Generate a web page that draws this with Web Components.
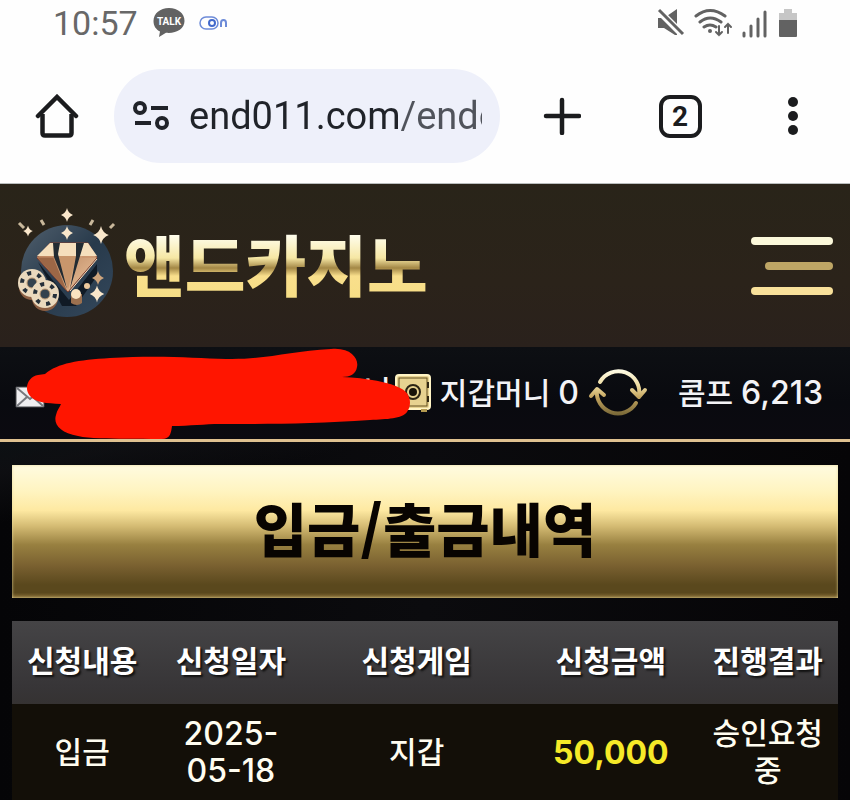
<!DOCTYPE html>
<html lang="ko">
<head>
<meta charset="utf-8">
<meta name="viewport" content="width=device-width, initial-scale=1">
<title>입금/출금내역</title>
<style>
    body {
        margin: 0;
        min-height: 100vh;
        display: flex;
        flex-direction: column;
        background: #060608;
        font-family: "Noto Sans CJK KR", sans-serif;
    }
</style>
</head>
<body>
<status-bar time="10:57"></status-bar>
<browser-toolbar url="end011.com/endo" tabs="2"></browser-toolbar>
<site-header>앤드카지노</site-header>
<wallet-bar money="0" comp="6,213"></wallet-bar>
<history-page>
    <page-title>입금/출금내역</page-title>
    <history-table></history-table>
</history-page>

<script>
class StatusBar extends HTMLElement {
    constructor() {
        super();
        this.attachShadow({ mode: "open" }).innerHTML = `
            <style>
                :host {
                    display: flex;
                    align-items: center;
                    height: 46px;
                    padding: 0 50px 0 53px;
                    background: #fefefe;
                    color: #686868;
                    font: 34px/46px Roboto, sans-serif;
                }
                svg { display: block; }
                .talk { margin-left: 15px; }
                .on { margin-left: 14px; }
                .right { margin-left: auto; }
            </style>
            <span>${this.getAttribute("time")}</span>
            <svg class="talk" width="32" height="32" viewBox="0 0 32 32">
                <path d="M16 1C7 1 .5 6.500 .5 14c0 5 2.500 8.500 6.500 10.500L6 30l7-4.200c10 1 18.500-3.800 18.500-11.800C31.500 6.500 25 1 16 1z" fill="#626262"/>
                <text x="16" y="18" text-anchor="middle" font-family="Roboto" font-weight="bold" font-size="10" fill="#fff">TALK</text>
            </svg>
            <svg class="on" width="30" height="16" viewBox="0 0 30 16" fill="none" stroke="#6d8bd8">
                <rect x="1" y="2" width="18" height="12" rx="6" stroke-width="1.500"/>
                <circle cx="13" cy="8" r="3" stroke="#4169cc" stroke-width="2"/>
                <path d="M22 12V8q0-3 2.500-3T27 8v4" stroke-width="2"/>
            </svg>
            <svg class="right" width="144" height="34" viewBox="0 0 144 34" fill="none" stroke="#626262">
                <path d="M2 12h6l13-9v26h-2L8 22H2z" fill="#626262" stroke="none"/>
                <path d="M1 3l26 26" stroke="#fefefe" stroke-width="7"/>
                <path d="M3 4l24 24" stroke-width="3"/>
                <g stroke-width="3" stroke-linecap="round">
                    <path d="M40 10q14-11 29 0M44 16q10-8 21 0M48 21q6-4 12 0"/>
                    <path d="M63 20v9M60 26l3 3 3-3M72 27v-9M69 21l3-3 3 3" stroke-width="2"/>
                    <path d="M88 27v3M95 20v10M102 13v17M109 6v24"/>
                </g>
                <circle cx="54" cy="25" r="2" fill="#626262" stroke="none"/>
                <path d="M128 3h8v4h5v8h-18V7h5z" fill="#c6c6c6" stroke="none"/>
                <path d="M123 14h18v16q0 1-1 1h-16q-1 0-1-1z" fill="#626262" stroke="none"/>
            </svg>
        `;
    }
}

class BrowserToolbar extends HTMLElement {
    constructor() {
        super();
        this.attachShadow({ mode: "open" }).innerHTML = `
            <style>
                :host {
                    display: grid;
                    grid-template-columns: 114px 1fr 124px 112px 114px;
                    align-items: center;
                    height: 138px;
                    padding-top: 3px;
                    box-sizing: border-box;
                    border-bottom: 1px solid #b9bdbd;
                    background: #fefefe;
                }
                button {
                    display: grid;
                    place-items: center;
                    justify-self: center;
                    padding: 0;
                    border: 0;
                    background: none;
                    color: #1b1c1e;
                }
                label {
                    display: flex;
                    align-items: center;
                    gap: 19px;
                    height: 94px;
                    padding: 0 18px;
                    box-sizing: border-box;
                    min-width: 0;
                    border-radius: 47px;
                    background: #eef0fa;
                }
                label svg { flex: none; }
                input {
                    flex: 1;
                    min-width: 0;
                    height: 56px;
                    padding: 0;
                    border: 0;
                    outline: 0;
                    background: linear-gradient(90deg, #202329 212px, #50535b 212px);
                    -webkit-background-clip: text;
                    background-clip: text;
                    color: transparent;
                    font: 38px/56px Roboto, sans-serif;
                }
                .tabs {
                    width: 43px;
                    height: 43px;
                    border: 4px solid #1b1c1e;
                    border-radius: 11px;
                    font: bold 28px/35px Roboto, sans-serif;
                }
            </style>
            <button aria-label="홈">
                <svg width="44" height="44" viewBox="0 0 44 44" fill="none" stroke="#1b1c1e" stroke-width="4.500" stroke-linecap="round">
                    <path d="M3 22L22 3l19 19"/>
                    <path d="M7.500 20v19q0 2.500 2.500 2.500h24q2.500 0 2.500-2.500V20" stroke-linecap="butt"/>
                </svg>
            </button>
            <label>
                <svg width="38" height="32" viewBox="0 0 38 32" fill="none" stroke="#202329" stroke-width="4" role="img" aria-label="주소">
                    <circle cx="8" cy="8" r="5"/>
                    <circle cx="30" cy="23" r="5"/>
                    <path d="M19 8h17M3 23h16"/>
                </svg>
                <input type="text" value="${this.getAttribute("url")}" spellcheck="false">
            </label>
            <button aria-label="새 탭">
                <svg width="38" height="38" viewBox="0 0 38 38" stroke="#1b1c1e" stroke-width="4.500" stroke-linecap="round">
                    <path d="M19 3v33M3 19h33"/>
                </svg>
            </button>
            <button class="tabs">${this.getAttribute("tabs")}</button>
            <button aria-label="메뉴">
                <svg width="12" height="40" viewBox="0 0 12 40" fill="#1b1c1e">
                    <circle cx="6" cy="6" r="5"/><circle cx="6" cy="20" r="5"/><circle cx="6" cy="34" r="5"/>
                </svg>
            </button>
        `;
    }
}

class SiteHeader extends HTMLElement {
    constructor() {
        super();
        this.attachShadow({ mode: "open" }).innerHTML = `
            <style>
                :host {
                    display: flex;
                    align-items: center;
                    justify-content: space-between;
                    height: 163px;
                    padding: 0 17px 0 10px;
                    background: linear-gradient(#292419, #2b231a 60%, #2a211c);
                }
                a {
                    display: flex;
                    align-items: center;
                    text-decoration: none;
                }
                svg { display: block; }
                .name {
                    margin-left: -6px;
                    padding-bottom: 8px;
                    background: linear-gradient(#fffef0 20px, #f6e7a4 44px, #a38745 54px, #f9df8c 62px, #f4dd80);
                    -webkit-background-clip: text;
                    background-clip: text;
                    color: transparent;
                    font-size: 66px;
                    font-weight: 900;
                    line-height: 96px;
                }
                button {
                    display: flex;
                    flex-direction: column;
                    align-items: flex-end;
                    gap: 17px;
                    padding: 0;
                    border: 0;
                    background: none;
                }
                i {
                    width: 82px;
                    height: 8px;
                    border-radius: 4px;
                    background: #fbf8da;
                }
                i:nth-child(2) { width: 68px; background: #bea665; }
                i:nth-child(3) { background: #f8e09a; }
            </style>
            <a href="#">
                <svg width="120" height="131" viewBox="0 0 120 131">
                    <defs>
                        <linearGradient id="disc" x1="0" y1="0" x2="1" y2="1">
                            <stop offset="0" stop-color="#51606e"/>
                            <stop offset=".5" stop-color="#283a4b"/>
                            <stop offset="1" stop-color="#34485c"/>
                        </linearGradient>
                        <linearGradient id="stone" x1="0" y1="0" x2="1" y2="1">
                            <stop offset="0" stop-color="#a9714c"/>
                            <stop offset="1" stop-color="#efc7a0"/>
                        </linearGradient>
                        <path id="star" d="M0-7Q1-2 6 0 1 2 0 7-1 2-6 0-1-2 0-7z"/>
                        <g id="chip">
                            <circle cy="4" r="13" fill="#8c5f43"/>
                            <circle r="14" fill="#ead9bd"/>
                            <circle r="10" fill="none" stroke="#25303a" stroke-width="4" stroke-dasharray="4 6.500"/>
                            <circle r="5" fill="#33424e" stroke="#b99874"/>
                        </g>
                    </defs>
                    <circle cx="57" cy="71" r="46" fill="url(#disc)"/>
                    <path d="M28 62l31 38 28-36v12l-21 30H52z" fill="#101a25"/>
                    <path d="M40 43h38l9 15-29 34-31-34z" fill="url(#stone)" stroke="#7d3b2c"/>
                    <path d="M40 43h38l9 13H27z" fill="#f5dfbd"/>
                    <path d="M27 57l30 34L43 57z" fill="#9c6746"/>
                    <path d="M48 56h18l-8 34z" fill="#c8966c"/>
                    <path d="M43 43h7l-2 11 9 35-13-32zM66 43h8l-4 13-10 33 6-33z" fill="#222b32"/>
                    <path d="M27 57h16M72 57h15" stroke="#c88f69"/>
                    <path d="M60 91l27-32" stroke="#ffe0bd"/>
                    <use href="#chip" x="22" y="83"/>
                    <use href="#chip" x="35" y="94"/>
                    <path d="M61 94h11v9q-5 4-11 0z" fill="#9b704f"/>
                    <circle cx="66" cy="94" r="5" fill="#fae3c0"/>
                    <circle cx="77" cy="86" r="3" fill="#ecc99e"/>
                    <g fill="#fae7cb">
                        <use href="#star" x="57" y="15"/>
                        <use href="#star" x="57" y="33"/>
                        <use href="#star" transform="translate(18 31) scale(.8)"/>
                        <use href="#star" transform="translate(91 35) scale(1.3)"/>
                        <use href="#star" x="88" y="78" fill="#cda47c"/>
                        <use href="#star" transform="translate(87 94) scale(1.2)"/>
                    </g>
                    <path d="M9 23l5 5M31 20l3 5M80 25l3-5M100 28l4-4" stroke="#c9b89b" stroke-width="3"/>
                </svg>
                <span class="name"><slot></slot></span>
            </a>
            <button aria-label="전체 메뉴"><i></i><i></i><i></i></button>
        `;
    }
}

class WalletBar extends HTMLElement {
    constructor() {
        super();
        this.attachShadow({ mode: "open" }).innerHTML = `
            <style>
                :host {
                    position: relative;
                    display: flex;
                    align-items: center;
                    height: 92px;
                    padding: 0 27px 0 15px;
                    border-bottom: 3px solid #dfc190;
                    background: linear-gradient(#0d0f13, #090a0f 60%, #0b0a10);
                    color: #f3f3f6;
                    font-size: 30px;
                    font-weight: 500;
                    line-height: 40px;
                    white-space: nowrap;
                }
                span { padding-bottom: 4px; }
                b { font: 500 32px/40px Inter, sans-serif; }
                svg { display: block; flex: none; overflow: visible; }
                .mail { margin-top: 8px; }
                .user { margin-left: auto; padding-bottom: 8px; }
                .safe { margin: 0 9px 0 4px; }
                button { padding: 0; border: 0; background: none; margin: 0 30px 0 9px; }
                span + b { margin-left: 8px; }
                .marker {
                    position: absolute;
                    left: 0;
                    top: 0;
                }
            </style>
            <svg class="mail" width="30" height="22" viewBox="0 0 30 22">
                <path d="M1 1h28v20H1z" fill="#eeeef0" stroke="#44464a"/>
                <path d="M2 2l13 11L28 2M2 20l10-9M28 20l-10-9" fill="none" stroke="#77797e" stroke-width="2"/>
            </svg>
            <span class="user">님</span>
            <svg class="safe" width="36" height="40" viewBox="0 0 36 40">
                <rect x="1" y="2" width="34" height="34" rx="3" fill="#e7d290" stroke="#fff4c5" stroke-width="2"/>
                <rect x="4" y="5" width="28" height="28" fill="none" stroke="#655120"/>
                <path d="M4 36h6v3H4zM26 36h6v3h-6z" fill="#b49a50"/>
                <path d="M33 9v6M33 23v6" stroke="#302713" stroke-width="2"/>
                <circle cx="18" cy="19" r="7" fill="#e7d290" stroke="#2b2414" stroke-width="2"/>
                <circle cx="18" cy="19" r="4" fill="#171309"/>
            </svg>
            <span>지갑머니</span><b>${this.getAttribute("money")}</b>
            <button aria-label="새로고침">
                <svg width="60" height="50" viewBox="0 0 60 50" fill="none" stroke="url(#g)" stroke-width="4" stroke-linecap="round" stroke-linejoin="round">
                    <defs>
                        <linearGradient id="g" gradientUnits="userSpaceOnUse" x1="0" y1="2" x2="0" y2="48">
                            <stop offset="0" stop-color="#fffce6"/>
                            <stop offset=".35" stop-color="#eedb9f"/>
                            <stop offset=".6" stop-color="#c2a35e"/>
                            <stop offset="1" stop-color="#746435"/>
                        </linearGradient>
                    </defs>
                    <path d="M12 14A21 21 0 0 1 51 28M44 22l7 7 6-7"/>
                    <path d="M48 35A21 21 0 0 1 9 22M3 28l6-7 7 6"/>
                </svg>
            </button>
            <span>콤프</span><b>${this.getAttribute("comp")}</b>
            <svg class="marker" width="412" height="94" viewBox="0 0 412 94" fill="#ff1500">
                <path d="M45 27C58 16 78 13 110 11C160 8 195 11 226 12C265 13 290 4 331 2C351 0 359 12 357 20C356 27 350 30 342 30C367 31 390 35 402 42C411 47 412 58 407 65C402 72 387 72 370 73C315 77 265 77 220 77C205 77 190 79 172 79C171 85 171 93 160 92C125 91 96 93 78 89C60 86 53 77 56 68C57 63 60 60 61 57C46 56 36 56 30 49C23 41 29 29 38 28Z"/>
            </svg>
        `;
    }
}

class HistoryPage extends HTMLElement {
    constructor() {
        super();
        this.attachShadow({ mode: "open" }).innerHTML = `
            <style>
                :host {
                    display: flex;
                    flex: 1;
                    flex-direction: column;
                    gap: 23px;
                    padding: 23px 12px 0;
                    background:
                        linear-gradient(168deg, #0c1013, #15161a88 30px, transparent 80px),
                        linear-gradient(90deg, #050507, #0b0b0e 50%, #060507);
                }
            </style>
            <slot></slot>
        `;
    }
}

class PageTitle extends HTMLElement {
    constructor() {
        super();
        this.attachShadow({ mode: "open" }).innerHTML = `
            <style>
                :host {
                    display: block;
                    padding: 20px 0 29px;
                    background: linear-gradient(#fffbe0, #fff4c0 20%, #fee9a2 34%, #d4bb73 46%, #988040 60%, #796030 76%, #5a481d 90%, #5a481d 96%, #8a7038);
                    box-shadow: inset 0 0 3px #e8d999;
                    color: #080401;
                }
                h1 {
                    margin: 0;
                    font-size: 58px;
                    font-weight: 900;
                    line-height: 84px;
                    text-align: center;
                }
            </style>
            <h1><slot></slot></h1>
        `;
    }
}

class HistoryTable extends HTMLElement {
    constructor() {
        super();
        this.attachShadow({ mode: "open" }).innerHTML = `
            <style>
                :host { display: block; }
                table {
                    width: 100%;
                    border-collapse: collapse;
                    table-layout: fixed;
                    color: #fffdf0;
                    font-size: 30px;
                    font-weight: 500;
                    line-height: 37px;
                    text-align: center;
                }
                thead { background: linear-gradient(#454446, #373537 80%, #353232); }
                th {
                    height: 83px;
                    padding: 0 0 6px;
                    box-sizing: border-box;
                    font-weight: bold;
                    color: #fff;
                    text-shadow: 2px 2px 2px #111;
                    white-space: nowrap;
                }
                tbody { background: #130f08; }
                td {
                    height: 96px;
                    padding: 0 12px 4px;
                    box-sizing: border-box;
                    word-break: break-all;
                }
                .num {
                    padding-bottom: 0;
                    font: 500 32px/37px Inter, sans-serif;
                }
                .amount { color: #f6e928; font-weight: bold; }
            </style>
            <table>
                <colgroup>
                    <col style="width: 17%"><col style="width: 19%"><col style="width: 26%"><col style="width: 21%"><col style="width: 17%">
                </colgroup>
                <thead>
                    <tr><th>신청내용</th><th>신청일자</th><th>신청게임</th><th>신청금액</th><th>진행결과</th></tr>
                </thead>
                <tbody>
                    <tr>
                        <td>입금</td>
                        <td class="num">2025-<br>05-18</td>
                        <td>지갑</td>
                        <td class="num amount">50,000</td>
                        <td>승인요청중</td>
                    </tr>
                </tbody>
            </table>
        `;
    }
}

customElements.define("status-bar", StatusBar);
customElements.define("browser-toolbar", BrowserToolbar);
customElements.define("site-header", SiteHeader);
customElements.define("wallet-bar", WalletBar);
customElements.define("history-page", HistoryPage);
customElements.define("page-title", PageTitle);
customElements.define("history-table", HistoryTable);
</script>
</body>
</html>
